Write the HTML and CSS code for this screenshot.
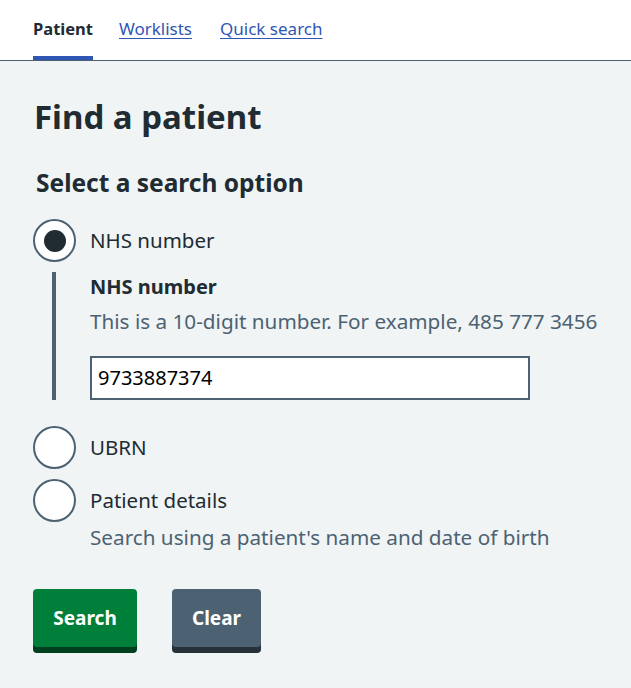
FILE: index.html
```html
<!DOCTYPE html>
<html lang="en">
<head>
<meta charset="utf-8">
<title>Find a patient</title>
<link rel="stylesheet" href="styles.css">
</head>
<body>
<nav class="tabs">
  <a class="tab tab-active" href="#">Patient</a>
  <a class="tab" href="#">Worklists</a>
  <a class="tab tab-last" href="#">Quick search</a>
</nav>
<main class="main">
  <h1 class="title">Find a patient</h1>
  <fieldset class="fieldset">
    <legend class="legend">Select a search option</legend>
    <div class="radios">
      <div class="radio">
        <span class="radio-circle radio-checked"></span>
        <span class="radio-label">NHS number</span>
      </div>
      <div class="conditional">
        <div class="field-label">NHS number</div>
        <div class="hint">This is a 10-digit number. For example, 485 777 3456</div>
        <div class="input">9733887374</div>
      </div>
      <div class="radio radio-ubrn">
        <span class="radio-circle"></span>
        <span class="radio-label">UBRN</span>
      </div>
      <div class="radio radio-details">
        <span class="radio-circle"></span>
        <div class="radio-text">
          <span class="radio-label">Patient details</span>
          <span class="hint radio-hint">Search using a patient's name and date of birth</span>
        </div>
      </div>
    </div>
  </fieldset>
  <div class="buttons">
    <button class="btn btn-primary">Search</button>
    <button class="btn btn-secondary">Clear</button>
  </div>
</main>
</body>
</html>
```
FILE: styles.css
```css
* { box-sizing: border-box; }
html, body { margin: 0; padding: 0; }
body {
  font-family: "Noto Sans", "Open Sans", sans-serif;
  color: #212b32;
  background: #f0f4f5;
  width: 631px;
  height: 688px;
  overflow: hidden;
}
.tabs {
  background: #fff;
  height: 61px;
  border-bottom: 1px solid #4c6272;
  display: flex;
  gap: 26px;
  padding-left: 33px;
}
.tab {
  display: flex;
  align-items: center;
  height: 60px;
  font-size: 17px;
  color: #3056b5;
  text-decoration: underline;
  text-decoration-thickness: 1px;
  text-underline-offset: 3px;
  border-bottom: 4px solid transparent;
}
.tab-last { margin-left: 2px; }
.tab-active {
  font-size: 16.5px;
  color: #212b32;
  font-weight: 700;
  text-decoration: none;
  border-bottom-color: #3056b5;
}
.main { padding: 0 33px; }
.title {
  margin: 0 0 28px;
  padding-top: 34px;
  font-size: 33px;
  line-height: 44px;
  font-weight: 700;
  padding-left: 1px;
}
.fieldset { border: 0; margin: 0; padding: 0; }
.legend {
  padding: 0 0 0 3px;
  font-size: 24.5px;
  line-height: 32px;
  font-weight: 700;
}
.radios { margin-top: 20px; display: flex; flex-direction: column; }
.radio { display: flex; align-items: flex-start; gap: 14px; }
.radio-circle {
  flex: none;
  width: 43px;
  height: 43px;
  border: 2px solid #4c6272;
  border-radius: 50%;
  background: #fff;
  display: flex;
  align-items: center;
  justify-content: center;
}
.radio-checked::after {
  content: "";
  width: 22px;
  height: 22px;
  border-radius: 50%;
  background: #212b32;
}
.radio-label { font-size: 20.5px; line-height: 43px; }
.radio-text { display: flex; flex-direction: column; }
.radio-hint { margin-top: 1px; }
.conditional {
  margin: 10px 0 0 19px;
  border-left: 4px solid #4c6272;
  padding: 2px 0 0 34px;
  height: 128px;
}
.field-label { font-size: 20px; font-weight: 700; line-height: 26px; }
.hint { font-size: 20.7px; color: #4c6272; line-height: 28px; }
.conditional .hint { margin-top: 7px; }
.input {
  margin-top: 21px;
  width: 440px;
  height: 44px;
  border: 2px solid #4c6272;
  background: #fff;
  font-size: 20px;
  color: #000;
  padding: 0 6px;
  line-height: 40px;
}
.radio-ubrn { margin-top: 26px; }
.radio-details { margin-top: 10px; }
.buttons { display: flex; gap: 35px; margin-top: 38px; }
.btn {
  font-family: inherit;
  font-size: 19px;
  font-weight: 700;
  color: #fff;
  border: 0;
  border-radius: 4px;
  height: 58px;
  padding: 0 20px;
}
.btn-primary { background: #007f3b; box-shadow: 0 6px 0 #00401e; width: 104px; }
.btn-secondary { background: #4c6272; box-shadow: 0 6px 0 #263139; width: 89px; }
```
